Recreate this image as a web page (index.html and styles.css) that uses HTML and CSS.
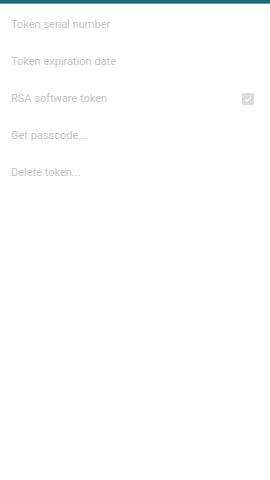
FILE: index.html
```html
<!DOCTYPE html>
<html lang="en">
<head>
    <meta charset="UTF-8">
    <meta name="viewport" content="width=device-width, initial-scale=1.0">
    <title>Token settings</title>
    <link rel="stylesheet" href="styles.css">
</head>
<body>
    <div class="top-bar"></div>

    <ul class="settings">
        <li class="row">Token serial number</li>
        <li class="row">Token expiration date</li>
        <li class="row">
            <span>RSA software token</span>
            <span class="check">
                <svg width="12" height="12" viewBox="0 0 12 12">
                    <path d="M3 6.2 L5.1 8.2 L9.2 3.8" fill="none" stroke="#fff" stroke-width="1.4"/>
                </svg>
            </span>
        </li>
        <li class="row">Get passcode...</li>
        <li class="row">Delete token...</li>
    </ul>
</body>
</html>
```

FILE: styles.css
```css
body {
    margin: 0;
    padding: 0;
    background-color: #fff;
    font-family: Roboto, "Noto Sans", sans-serif;
}

.top-bar {
    height: 3px;
    background-color: #1f6a76;
    border-bottom: 1px solid #5f9ea8;
}

.settings {
    list-style: none;
    margin: 0;
    padding: 2px 0 0;
}

.settings .row {
    display: flex;
    justify-content: space-between;
    align-items: center;
    height: 37px;
    padding: 0 16px 0 11px;
    font-size: 11px;
    color: #c3c3c3;
}

.settings .check {
    display: flex;
    width: 12px;
    height: 12px;
    background-color: #dcdcdc;
    border-radius: 1px;
}
```
